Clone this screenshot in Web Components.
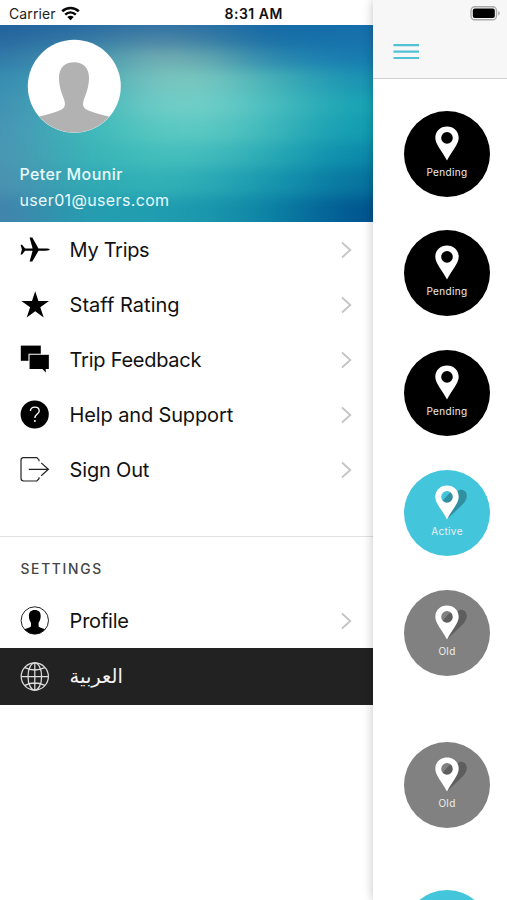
<!DOCTYPE html>
<html lang="en"><head><meta charset="utf-8"><title>Trips menu</title>
<style>html,body{margin:0;height:100%;overflow:hidden;background:#fff}body{font-family:Inter,"Noto Sans","DejaVu Sans",sans-serif}</style></head>
<body><app-screen></app-screen>
<script>
const define=(name,html)=>customElements.define(name,class extends HTMLElement{
  connectedCallback(){if(this.shadowRoot)return;const t=document.createElement('template');
    t.innerHTML=typeof html==='function'?html(this):html;
    this.attachShadow({mode:'open'}).append(t.content.cloneNode(true));}
});
const icons={
plane:'<path d="M.6 9.800h1.500l3 3.600h7.500L9.600 2.400h2.700l6.200 11h7.200c2.600 0 4.100.5 4.100 1.200s-1.500 1.200-4.100 1.200h-7.200L12.300 26.600H9.600l3-10.800H5.100l-3 3.600H.6l1.300-4.800z"/>',
star:'<path d="M15.200 1.200l3.200 9.900H29l-8.700 6.100 3.400 10.400-8.500-6.400-8.500 6.400 3.400-10.400L1.400 11.100H12z"/>',
chat:'<path d="M.8.6h20v15.200H5.600H.8z"/><path d="M9 9.200h20.400v15.300h-3.100v4.300l-4.200-4.300H9z" stroke="#fff" stroke-width="1.100"/>',
help:'<circle cx="14.700" cy="14.500" r="14.100"/><path d="M10.400 11c.2-2.400 2-3.900 4.400-3.900 2.600 0 4.400 1.500 4.400 3.800 0 3.200-4.300 3.100-4.300 7" fill="none" stroke="#fff" stroke-width="1.350"/><circle cx="14.900" cy="21" r="1" fill="#fff"/>',
out:'<path d="M19 6.300V4.900L16.800 2.600H3.700c-1.700 0-2.700 1-2.700 2.700v18c0 1.700 1 2.700 2.700 2.700h13.100l2.200-2.300v-1.400M8.800 14.300h19.400M21.200 7.900l7.200 6.400-7.200 6.400" fill="none" stroke="#222" stroke-width="1.200"/>',
profile:'<circle cx="14.800" cy="14.500" r="13.700" fill="#fff" stroke="#222" stroke-width="1"/><path d="M14.800 4.100c3.900 0 6 2.300 5.900 6-.1 3.100-1 5.200-2.100 6.700v3.300c0 1.600 3.600 1.900 6.400 3.200A13.500 13.500 0 0 1 4.600 23.300c2.800-1.300 6.400-1.600 6.400-3.200v-3.300c-1.100-1.500-2-3.600-2.100-6.700-.1-3.700 2-6 5.900-6z"/>',
globe:'<g fill="none" stroke="#dedede" stroke-width="1.250"><circle cx="14.800" cy="14.500" r="13.600"/><ellipse cx="14.800" cy="14.500" rx="6.800" ry="13.600"/><path d="M14.800.9v27.200M1.200 14.500h27.200M4.800 5.600q10 4.800 20 0M4.800 23.400q10-4.800 20 0"/></g>'};

define('menu-icon',e=>`<style>:host{display:block;width:29px;height:29px;flex:none}svg{display:block;overflow:visible}</style><svg width="29" height="29" viewBox="0 0 29 29">${icons[e.getAttribute('name')]}</svg>`);

define('menu-item',e=>`<style>
:host{display:flex;align-items:center;height:55px;box-sizing:border-box;padding:0 21px 0 20px;font-size:20px;color:#111;letter-spacing:var(--ls,-.18px)}
:host([dark]){background:#222;color:#f4f4f4;height:57px}
.label{margin-left:20.600px;flex:1;white-space:nowrap;line-height:28px}
svg{display:block;flex:none}</style>
<menu-icon name="${e.getAttribute('icon')}"></menu-icon><span class="label"><slot></slot></span>
${e.hasAttribute('dark')?'':'<svg width="12" height="18" viewBox="0 0 12 18"><path d="M2 1.500L10.300 9 2 16.500" fill="none" stroke="#c4c4c6" stroke-width="1.800"/></svg>'}`);

// Rows of colours for the blurred header backdrop: [y, colours from left to right]
const mesh=[
 [24,['#22619d','#286ba1','#3472a2','#296fa3','#166aa5','#146ca8','#176fab']],
 [40,['#27699f','#367ba5','#5088a5','#3b7ea5','#1a70a6','#1671aa','#1872ad']],
 [58,['#3079a9','#4596ae','#74b0b3','#64a7af','#2e8baf','#1b7fb1','#167bb0']],
 [80,['#378bb1','#46a8b5','#7bc6bf','#76c7c0','#48b2b7','#259cb4','#1790b2']],
 [105,['#4090b3','#45b4b9','#70cdc6','#70cec7','#4bbebf','#26a9b6','#14a1b3']],
 [130,['#4893b4','#3cb8b9','#5bc9c2','#5cc9c3','#3fb8bb','#1ca2b4','#0f9ab0']],
 [155,['#4b94b2','#38b4b7','#45bfbd','#44bbbc','#2aabb5','#1193ae','#0a86a8']],
 [180,['#4c90b0','#30aab4','#32b3b7','#2caab5','#1898af','#0a7ea4','#066f9c']],
 [212,['#4482ab','#249eb0','#209db0','#1b97ad','#0c83a5','#046398','#00538c']]];
define('profile-header',()=>`<style>
:host{display:flex;flex-direction:column;position:relative;z-index:0;overflow:hidden;height:197px;box-sizing:border-box;padding:14px 20px 0;color:#e9fbff}
.bg{position:absolute;inset:0;z-index:-1}
.avatar{display:block;margin-left:7px;width:95px;height:95px;flex:none}
.name{font-size:16px;font-weight:500;line-height:20px;margin-top:30px;margin-left:-.5px;white-space:nowrap;letter-spacing:.4px}
.mail{font-size:16px;line-height:20px;margin-top:6px;margin-left:-.5px;white-space:nowrap;letter-spacing:.35px}
</style>
<svg class="bg" width="373" height="197" viewBox="0 25 373 197"><defs>
<filter id="soft" x="-140" y="-60" width="653" height="400" filterUnits="userSpaceOnUse" color-interpolation-filters="sRGB"><feGaussianBlur stdDeviation="20 7"/></filter>
${mesh.map(([y,c],i)=>`<linearGradient id="g${i}" gradientUnits="userSpaceOnUse" x1="0" x2="373" y1="0" y2="0">${c.map((v,j)=>`<stop offset="${[0,.24,.43,.56,.72,.88,1][j]}" stop-color="${v}"/>`).join('')}</linearGradient>`).join('')}</defs>
<g filter="url(#soft)">${mesh.map(([y],i)=>{const a=i?(mesh[i-1][0]+y)/2:-50,b=i<mesh.length-1?(y+mesh[i+1][0])/2:300;return `<rect x="-140" y="${a}" width="653" height="${b-a+.5}" fill="url(#g${i})"/>`}).join('')}</g></svg>
<svg class="avatar" viewBox="0 0 95 95"><defs><clipPath id="c"><circle cx="47.300" cy="47.300" r="46.300"/></clipPath></defs><circle cx="47.300" cy="47.300" r="46.500" fill="#fff"/><path clip-path="url(#c)" fill="#b2b2b2" d="M47 23.300c9.200 0 15 5.600 15 15.500 0 9.500-3 16-5 21.500-1.800 5.500-1.400 8.500 4.500 11.300 6 2.600 13 4.100 20.500 6V95H12V77.600c7.500-1.900 14.500-3.400 20.500-6 5.900-2.800 6.300-5.800 4.500-11.300-2-5.500-5-12-5-21.500 0-9.900 5.800-15.500 15-15.500z"/></svg>
<span class="name"><slot name="name"></slot></span><span class="mail"><slot name="mail"></slot></span>`);

define('status-bar',`<style>:host{display:flex;height:25px;box-sizing:border-box;align-items:center;padding:2px 0 0 9px;font-size:14px;color:#222;background:#fff}
.carrier{width:49px;letter-spacing:.1px}.wifi{margin-left:3px;margin-top:-1px}.time{font-weight:600;font-size:14px;color:#111;margin-left:144.500px;white-space:nowrap;letter-spacing:.5px}</style>
<span class="carrier">Carrier</span><svg class="wifi" width="19" height="15" viewBox="0 0 19 15"><g fill="none" stroke="#080808" stroke-width="2.600"><path d="M1.200 5.300C6 .8 13 .8 17.800 5.300M4.200 8.600c3.200-2.900 7.400-2.900 10.600 0"/></g><path d="M9.500 14.200L6.300 11c1.800-1.600 4.600-1.600 6.400 0z"/></svg><span class="time">8:31 AM</span>`);

define('side-drawer',`<style>:host{display:flex;flex-direction:column;width:373px;height:900px;background:#fff;flex:none}
nav{display:flex;flex-direction:column}
.settings{border-top:1px solid #e1e1e1;margin-top:39px;padding-top:22px}
h2{margin:0 0 14px 20.500px;font-size:13.800px;line-height:20px;font-weight:500;color:#454545;letter-spacing:1.700px}</style>
<status-bar></status-bar>
<profile-header><span slot="name">Peter Mounir</span><span slot="mail">user01@users.com</span></profile-header>
<nav><menu-item icon="plane" style="--ls:-.32px">My Trips</menu-item><menu-item icon="star" style="--ls:.02px">Staff Rating</menu-item><menu-item icon="chat" style="--ls:-.26px">Trip Feedback</menu-item><menu-item icon="help" style="--ls:-.14px">Help and Support</menu-item><menu-item icon="out">Sign Out</menu-item></nav>
<nav class="settings"><h2>SETTINGS</h2><menu-item icon="profile" style="--ls:-.22px">Profile</menu-item><menu-item icon="globe" dark style="--ls:0"><span lang="ar" style="font-family:'DejaVu Sans',sans-serif;font-size:19.500px">العربية</span></menu-item></nav>`);

define('trip-badge',`<style>:host{display:flex;flex-direction:column;align-items:center;width:86px;height:86px;border-radius:50%;box-sizing:border-box;padding-top:15px;flex:none;background:var(--c,#000);color:#eee;font-size:10px;line-height:14px;letter-spacing:.35px}
svg{display:block;overflow:visible;margin-bottom:4px}</style>
<svg width="24" height="35" viewBox="0 0 24 35"><path d="M12 34.500C15 24 19 11 22.500 6.500c2-2.400 5.500-2.200 7.500-.2 2.400 2.500 2.400 6.700 0 10.100C26.500 21.500 18 28 12 34.500z" fill="#000" opacity=".27"/><circle cx="12" cy="12" r="6.500" fill="var(--c,#000)"/><path d="M7.500 15.800L15.500 7a6.500 6.500 0 0 1 3 5c0 4-3.500 6.500-6.500 6.500-2 0-3.700-1-4.500-2.700z" fill="#000" opacity=".27"/><path fill="#fff" fill-rule="evenodd" d="M12 .5c6.600 0 11.700 4.800 11.700 11.200C23.700 18.500 17 24.500 12 34.500 7 24.500.3 18.500.3 11.700.3 5.300 5.400.5 12 .5zm0 5.600a5.800 5.800 0 1 0 0 11.600 5.800 5.800 0 0 0 0-11.600z"/></svg><slot></slot>`);

define('trips-panel',`<style>:host{display:block;width:134.500px;margin-left:-.5px;height:900px;background:#fff;box-shadow:0 0 10px rgba(0,0,0,.24);flex:none;position:relative}
header{height:79px;box-sizing:border-box;background:#f7f7f7;border-bottom:1px solid #d0d0d0;display:flex;justify-content:space-between;padding:6px 6px 0 20.500px}
.menu{margin-top:37px}.list{display:flex;flex-direction:column;align-items:flex-start;padding:31.600px 0 0 31.500px;gap:33.750px;height:821px;overflow:hidden;box-sizing:border-box}</style>
<header><svg class="menu" width="27" height="18" viewBox="0 0 27 18"><path d="M.5 2.200h25.500M.5 8.600h25.500M.5 15h25.500" stroke="#51c1d6" stroke-width="2.200"/></svg>
<svg width="31" height="15" viewBox="0 0 31 15"><rect x="1" y=".8" width="25.500" height="13" rx="3.800" fill="#f7f7f7" stroke="#aaa" stroke-width="1.400"/><rect x="2.800" y="2.500" width="22" height="9.600" rx="2" fill="#000"/><path d="M28.200 5v4.600c2.200-.8 2.200-3.800 0-4.600z" fill="#aaa"/></svg></header>
<div class="list"><trip-badge>Pending</trip-badge><trip-badge>Pending</trip-badge><trip-badge>Pending</trip-badge><trip-badge style="--c:#43c5dc">Active</trip-badge><trip-badge style="--c:#818181">Old</trip-badge><trip-badge style="--c:#818181;margin-top:33px">Old</trip-badge><trip-badge style="--c:#43c5dc;margin-top:28px"></trip-badge></div>`);

define('app-screen',`<style>:host{display:flex;width:507px;height:900px;overflow:hidden}</style><side-drawer></side-drawer><trips-panel></trips-panel>`);
</script></body></html>
